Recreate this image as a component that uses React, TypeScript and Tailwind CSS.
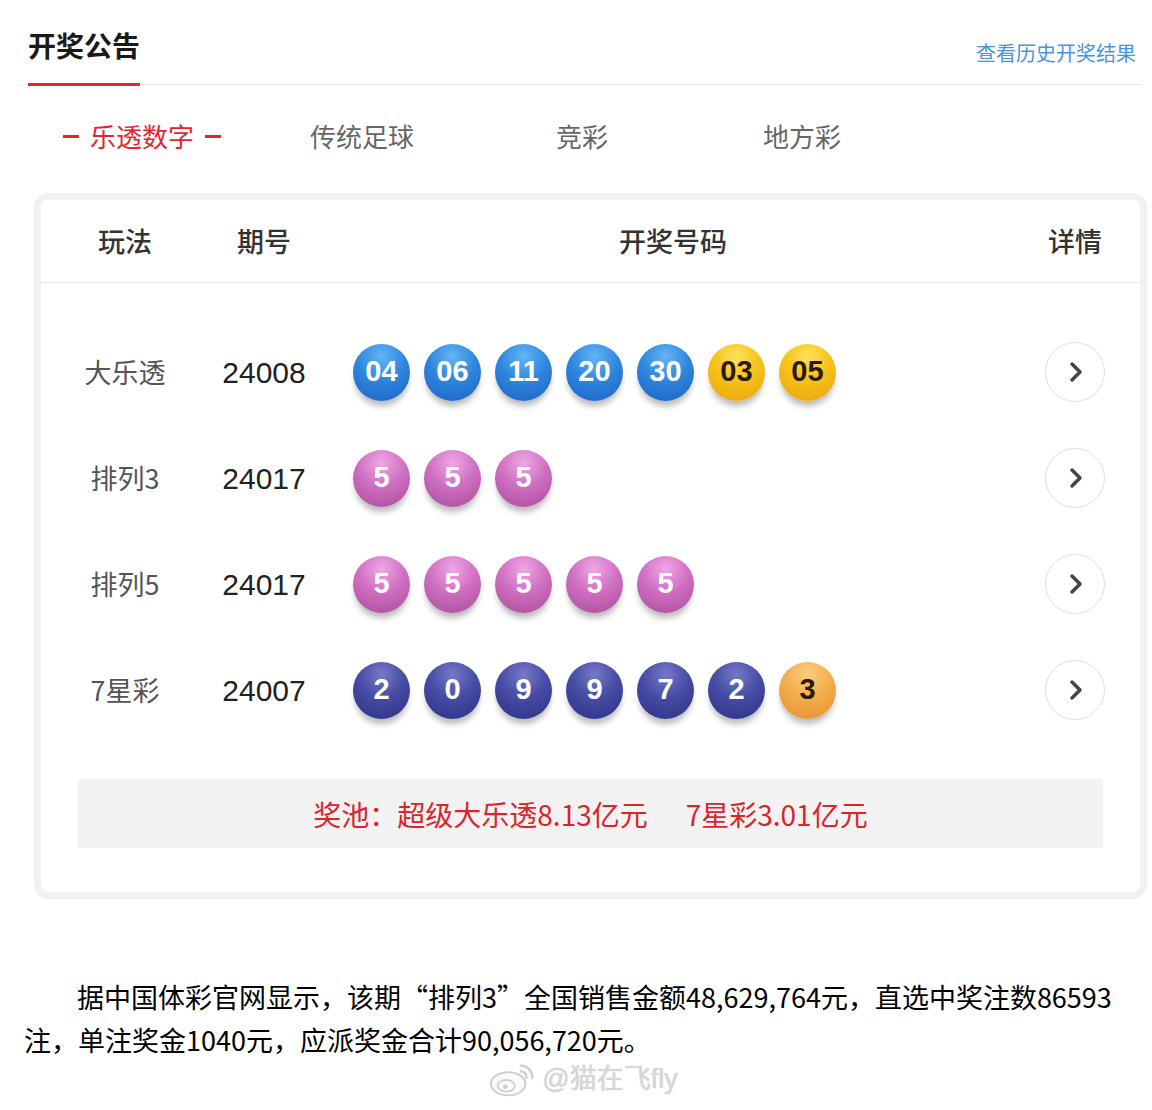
import { ChevronRight } from "lucide-react";

type Ball = { n: string; c: "blue" | "yellow" | "pink" | "navy" | "orange" };

const ballStyle: Record<Ball["c"], string> = {
    blue: "bg-[radial-gradient(circle_at_50%_22%,#63b5f6_0%,#2f86dc_45%,#1b62c4_100%)] text-white",
    yellow: "bg-[radial-gradient(circle_at_50%_22%,#fde15a_0%,#f6c11a_45%,#e6a30a_100%)] text-[#2b1a08]",
    pink: "bg-[radial-gradient(circle_at_50%_22%,#f0a6e6_0%,#cf6fc2_45%,#a84c98_100%)] text-white",
    navy: "bg-[radial-gradient(circle_at_50%_22%,#7479c9_0%,#464ba3_45%,#2d3187_100%)] text-white",
    orange: "bg-[radial-gradient(circle_at_50%_22%,#fbcd80_0%,#f3ad4c_45%,#e48f2a_100%)] text-[#2b1a08]",
};

const rows: { name: string; issue: string; balls: Ball[] }[] = [
    {
        name: "大乐透",
        issue: "24008",
        balls: [
            { n: "04", c: "blue" },
            { n: "06", c: "blue" },
            { n: "11", c: "blue" },
            { n: "20", c: "blue" },
            { n: "30", c: "blue" },
            { n: "03", c: "yellow" },
            { n: "05", c: "yellow" },
        ],
    },
    {
        name: "排列3",
        issue: "24017",
        balls: [
            { n: "5", c: "pink" },
            { n: "5", c: "pink" },
            { n: "5", c: "pink" },
        ],
    },
    {
        name: "排列5",
        issue: "24017",
        balls: [
            { n: "5", c: "pink" },
            { n: "5", c: "pink" },
            { n: "5", c: "pink" },
            { n: "5", c: "pink" },
            { n: "5", c: "pink" },
        ],
    },
    {
        name: "7星彩",
        issue: "24007",
        balls: [
            { n: "2", c: "navy" },
            { n: "0", c: "navy" },
            { n: "9", c: "navy" },
            { n: "9", c: "navy" },
            { n: "7", c: "navy" },
            { n: "2", c: "navy" },
            { n: "3", c: "orange" },
        ],
    },
];

function LotteryBall({ ball }: { ball: Ball }) {
    return (
        <div className={`w-[57px] h-[57px] rounded-full flex items-center justify-center text-[29px] font-bold font-['Liberation_Sans',Arial,sans-serif] shadow-[0_7px_6px_-2px_rgba(0,0,0,0.28)] ${ballStyle[ball.c]}`}>
            {ball.n}
        </div>
    );
}

function WeiboLogo() {
    return (
        <svg width="50" height="40" viewBox="0 0 52 40" fill="none">
            <ellipse cx="21" cy="25" rx="18" ry="12" fill="#fafafa" stroke="#cdcdcd" strokeWidth="2" />
            <ellipse cx="19" cy="27" rx="9" ry="6" fill="none" stroke="#cdcdcd" strokeWidth="1.8" />
            <circle cx="18" cy="28" r="2.4" fill="#cdcdcd" />
            <path d="M34 6 a12 12 0 0 1 12 13" stroke="#cdcdcd" strokeWidth="2.4" strokeLinecap="round" />
            <path d="M34 12 a6 6 0 0 1 6 7" stroke="#cdcdcd" strokeWidth="2.4" strokeLinecap="round" />
        </svg>
    );
}

export default function App() {
    return (
        <div className="w-[1152px] min-h-[1110px] bg-white font-['Noto_Sans_CJK_SC',sans-serif] overflow-hidden">
            {/* header */}
            <div className="ml-[28px] w-[1112px] h-[85px] flex items-end justify-between border-b border-[#e2e2e2]">
                <div className="text-[28px] font-bold text-[#1a1a1a] leading-[42px] pb-[17px] border-b-[3px] border-[#e0262d] -mb-[2px]">
                    开奖公告
                </div>
                <div className="text-[20px] text-[#4a93e0] leading-[28px] pb-[17px] pr-[4px]">
                    查看历史开奖结果
                </div>
            </div>

            {/* tabs */}
            <div className="flex ml-[32px] mt-[33px] text-[26px] leading-[36px]">
                <div className="w-[220px] flex items-center justify-center gap-[11px] text-[#e0262d]">
                    <span className="w-[16px] h-[3px] bg-[#e0262d]"></span>
                    <span>乐透数字</span>
                    <span className="w-[16px] h-[3px] bg-[#e0262d]"></span>
                </div>
                <div className="w-[220px] text-center text-[#666]">传统足球</div>
                <div className="w-[220px] text-center text-[#666]">竞彩</div>
                <div className="w-[220px] text-center text-[#666]">地方彩</div>
            </div>

            {/* card */}
            <div className="ml-[34px] mt-[39px] w-[1113px] border-[7px] border-[#f1f1f1] rounded-[14px] bg-white">
                <div className="h-[83px] flex items-center border-b border-[#e6e6e6] text-[27px] font-medium text-[#333]">
                    <div className="w-[168px] text-center">玩法</div>
                    <div className="w-[110px] text-center">期号</div>
                    <div className="flex-1 text-center pl-[17px]">开奖号码</div>
                    <div className="w-[130px] text-center">详情</div>
                </div>

                <div className="pt-[36px]">
                    {rows.map((r) => (
                        <div key={r.name} className="h-[106px] flex items-center">
                            <div className="w-[168px] text-center text-[27px] text-[#555]">{r.name}</div>
                            <div className="w-[110px] text-center text-[30px] text-[#222] font-['Liberation_Sans',Arial,sans-serif]">{r.issue}</div>
                            <div className="flex-1 flex gap-[14px] pl-[34px]">
                                {r.balls.map((b, i) => (
                                    <LotteryBall key={i} ball={b} />
                                ))}
                            </div>
                            <div className="w-[130px] flex justify-center">
                                <div className="w-[60px] h-[60px] rounded-full border-[1.5px] border-[#e0e0e0] flex items-center justify-center text-[#444]">
                                    <ChevronRight size={32} strokeWidth={2.6} className="ml-[2px]" />
                                </div>
                            </div>
                        </div>
                    ))}
                </div>

                <div className="mx-[37px] mt-[36px] mb-[44px] h-[69px] bg-[#f2f2f2] flex items-center justify-center gap-[38px] text-[28px] text-[#d9252b]">
                    <span>奖池：超级大乐透8.13亿元</span>
                    <span>7星彩3.01亿元</span>
                </div>
            </div>

            {/* article */}
            <p className="mt-[76px] px-[24px] text-[27px] leading-[43px] text-black indent-[53px]">
                据中国体彩官网显示，该期“排列3”全国销售金额48,629,764元，直选中奖注数86593注，单注奖金1040元，应派奖金合计90,056,720元。
            </p>

            <div className="flex justify-center items-center gap-[4px] pl-[14px] -mt-[2px]">
                <WeiboLogo />
                <span className="text-[27px] text-[#d6d6d6] font-['Liberation_Sans','Noto_Sans_CJK_SC',sans-serif] [text-shadow:0_0_2px_#fff,0_0_1px_#999]">
                    @猫在飞fly
                </span>
            </div>
        </div>
    );
}
